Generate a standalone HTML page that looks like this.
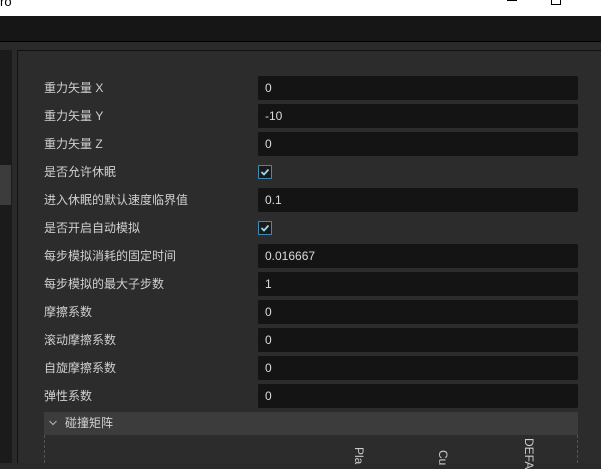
<!DOCTYPE html>
<html><head><meta charset="utf-8"><style>
body{margin:0;width:601px;height:463px;overflow:hidden;background:#2a2a2a;font-family:"Liberation Sans","Noto Sans CJK SC",sans-serif;position:relative}
.a{position:absolute}
.lbl{position:absolute;left:44px;color:#d0d0d0;font-size:12px;line-height:24px}
.inp{position:absolute;left:258px;width:320px;height:24px;background:#141414;border-radius:2px;color:#dcdcdc;font-size:12px;line-height:24px;box-sizing:border-box;padding-left:7px}
.cb{position:absolute;left:258px;width:12px;height:12px;border:1px solid #3d8db5;background:#1a1a1a;border-radius:1px}
</style></head><body>
<div class="a" style="left:0;top:0;width:601px;height:16px;background:#fff"></div>
<div class="a" style="left:0;top:-6px;font-size:13px;color:#000">ro</div>
<div class="a" style="left:507px;top:0;width:10px;height:1px;border-top:1px solid #000"></div>
<div class="a" style="left:551px;top:0;width:8px;height:4px;border:1px solid #000;border-top:none"></div>
<div class="a" style="left:0;top:16px;width:601px;height:25px;background:#161616"></div>
<div class="a" style="left:0;top:41px;width:601px;height:1px;background:#000"></div>
<div class="a" style="left:0;top:50px;width:12px;height:413px;background:#1b1b1b"></div>
<div class="a" style="left:0;top:165px;width:11px;height:40px;background:#3c3c3c"></div>
<div class="a" style="left:17px;top:50px;width:1px;height:413px;background:#111"></div>
<div class="a" style="left:18px;top:50px;width:583px;height:1px;background:#111"></div>
<div class="a" style="left:18px;top:51px;width:583px;height:412px;background:#2c2c2c"></div>

<div class="lbl" style="top:76px">重力矢量 X</div><div class="inp" style="top:76px">0</div>
<div class="lbl" style="top:104px">重力矢量 Y</div><div class="inp" style="top:104px">-10</div>
<div class="lbl" style="top:132px">重力矢量 Z</div><div class="inp" style="top:132px">0</div>
<div class="lbl" style="top:160px">是否允许休眠</div>
<div class="cb" style="top:165px"><svg width="12" height="12" style="position:absolute;left:0;top:0"><path d="M2.5 6 L5 8.5 L9.5 3.5" stroke="#9fd8ee" stroke-width="1.8" fill="none"/></svg></div>
<div class="lbl" style="top:188px">进入休眠的默认速度临界值</div><div class="inp" style="top:188px">0.1</div>
<div class="lbl" style="top:216px">是否开启自动模拟</div>
<div class="cb" style="top:221px"><svg width="12" height="12" style="position:absolute;left:0;top:0"><path d="M2.5 6 L5 8.5 L9.5 3.5" stroke="#9fd8ee" stroke-width="1.8" fill="none"/></svg></div>
<div class="lbl" style="top:244px">每步模拟消耗的固定时间</div><div class="inp" style="top:244px">0.016667</div>
<div class="lbl" style="top:272px">每步模拟的最大子步数</div><div class="inp" style="top:272px">1</div>
<div class="lbl" style="top:300px">摩擦系数</div><div class="inp" style="top:300px">0</div>
<div class="lbl" style="top:328px">滚动摩擦系数</div><div class="inp" style="top:328px">0</div>
<div class="lbl" style="top:356px">自旋摩擦系数</div><div class="inp" style="top:356px">0</div>
<div class="lbl" style="top:384px">弹性系数</div><div class="inp" style="top:384px">0</div>

<div class="a" style="left:44px;top:412px;width:534px;height:23px;background:#3c3c3c"></div>
<svg class="a" style="left:48px;top:418px" width="10" height="10"><path d="M1.5 3 L5 6.5 L8.5 3" stroke="#aaa" stroke-width="1.2" fill="none"/></svg>
<div class="a" style="left:65px;top:412px;line-height:23px;font-size:12px;color:#d0d0d0">碰撞矩阵</div>
<div class="a" style="left:44px;top:435px;width:0;height:28px;border-left:1px dashed #555"></div>
<div class="a" style="left:577px;top:435px;width:0;height:28px;border-left:1px dashed #555"></div>
<div class="a" style="left:353px;top:447px;font-size:12px;color:#ccc;transform:rotate(90deg);transform-origin:0 0;left:366px">Pla</div>
<div class="a" style="top:450px;font-size:12px;color:#ccc;transform:rotate(90deg);transform-origin:0 0;left:450px">Cu</div>
<div class="a" style="top:438px;font-size:12px;color:#ccc;transform:rotate(90deg);transform-origin:0 0;left:536px">DEFA</div>
</body></html>
